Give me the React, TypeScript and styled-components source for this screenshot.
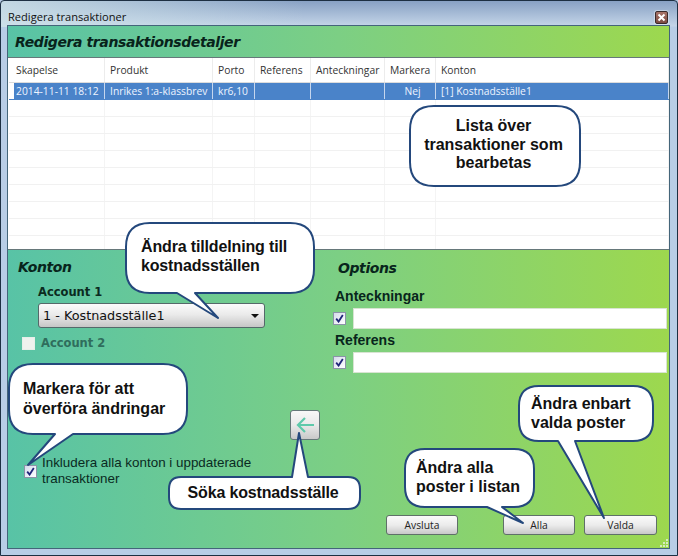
import React from "react";
import styled, { createGlobalStyle } from "styled-components";

const Global = createGlobalStyle`
  html, body { margin: 0; padding: 0; background: #b8cde6; }
  * { box-sizing: border-box; }
`;

const greenGradient = "linear-gradient(90deg, #58c3a6 0%, #7ccf84 50%, #9dd84e 100%)";

const Window = styled.div`
  position: relative;
  width: 678px;
  height: 556px;
  display: flex;
  flex-direction: column;
  padding: 0 8px 7px 7px;
  border: 1px solid #1d2f42;
  border-radius: 4px 4px 0 0;
  overflow: hidden;
  background:
    linear-gradient(90deg, rgba(205, 225, 232, 0.85) 0, rgba(205, 225, 232, 0) 45%) 0 0 / 100% 26px no-repeat,
    linear-gradient(180deg, #88a1c4 0, #c4d5e8 25px, #b8cde6 26px, #b8cde6 100%);
`;

const TitleBar = styled.div`
  height: 25px;
  flex: none;
  display: flex;
  align-items: center;
  justify-content: space-between;
  padding: 7px 1px 0 0;
  font: 11.1px/16px "Open Sans", sans-serif;
  color: #111;
`;

const CloseButton = styled.div`
  width: 13px;
  height: 13px;
  display: flex;
  align-items: center;
  justify-content: center;
  background: linear-gradient(180deg, #a87468, #7c4a42);
  border: 1px solid #3a2a2a;
  border-radius: 2px;
  box-shadow: 0 0 0 1px rgba(255, 255, 255, 0.35);
`;

const Content = styled.div`
  flex: 1;
  display: flex;
  flex-direction: column;
  min-height: 0;
  outline: 1px solid #44657a;
`;

const Banner = styled.div`
  height: 31px;
  flex: none;
  display: flex;
  align-items: center;
  padding-left: 7px;
  background: ${greenGradient};
  font: italic bold 14px/20px "DejaVu Sans", sans-serif;
  letter-spacing: -0.4px;
  color: #08231b;
`;

const List = styled.div`
  height: 193px;
  flex: none;
  background: #fff;
  border-top: 1px solid #66787a;
  border-bottom: 1px solid #66787a;
  padding-left: 1px;
  overflow: hidden;
  font: 10.3px/16px "Open Sans", sans-serif;
`;

const columns = "96px 108px 42px 56px 74px 51px 1fr";

const HeaderRow = styled.div`
  display: grid;
  grid-template-columns: ${columns};
  height: 25px;
  border-bottom: 1px solid #dcdcdc;
  color: #333;
`;

const HeaderCell = styled.div<{ $first?: boolean }>`
  display: flex;
  align-items: center;
  padding-left: ${(p) => (p.$first ? "7px" : "5px")};
  border-right: 1px solid #ececec;
`;

const Row = styled.div<{ $selected?: boolean }>`
  display: grid;
  grid-template-columns: ${columns};
  height: 17px;
  border-bottom: 1px solid ${(p) => (p.$selected ? "#4a83c9" : "#f1f1f1")};
  color: #eef4ff;
`;

const Cell = styled.div<{ $selected?: boolean; $first?: boolean; $center?: boolean }>`
  padding-left: ${(p) => (p.$first ? "2px" : "5px")};
  margin-left: ${(p) => (p.$first ? "5px" : "0")};
  text-align: ${(p) => (p.$center ? "center" : "left")};
  white-space: nowrap;
  overflow: hidden;
  line-height: 16px;
  background: ${(p) => (p.$selected ? "#4a83c9" : "transparent")};
  border-right: 1px solid ${(p) => (p.$selected ? "#c5d6ee" : "#f4f4f4")};
`;

const Body = styled.div`
  flex: 1;
  display: flex;
  flex-direction: column;
  min-height: 0;
  background: ${greenGradient};
`;

const Columns = styled.div`
  display: flex;
`;

const LeftColumn = styled.div`
  width: 325px;
  flex: none;
  display: flex;
  flex-direction: column;
`;

const RightColumn = styled.div`
  flex: 1;
  padding-right: 2px;
  display: flex;
  flex-direction: column;
`;

const SectionTitle = styled.div<{ $top: number; $left: number }>`
  font: italic bold 14px/18px "DejaVu Sans", sans-serif;
  letter-spacing: -0.4px;
  color: #08251c;
  margin: ${(p) => p.$top}px 0 0 ${(p) => p.$left}px;
`;

const AccountLabel = styled.div`
  margin: 8px 0 0 30px;
  font: bold 11.5px/16px "DejaVu Sans", sans-serif;
  color: #0b2a20;
`;

const Select = styled.div`
  margin: 3px 0 0 30px;
  width: 227px;
  height: 25px;
  display: flex;
  align-items: center;
  justify-content: space-between;
  padding: 0 5px 0 4px;
  border: 1px solid #55696a;
  border-radius: 3px;
  background: linear-gradient(180deg, #fbfbfb 0%, #ebebeb 45%, #c6c6c6 100%);
  font: 12.8px/18px "DejaVu Sans", sans-serif;
  color: #111;
`;

const Caret = styled.span`
  width: 0;
  height: 0;
  border-left: 4px solid transparent;
  border-right: 4px solid transparent;
  border-top: 4px solid #111;
`;

const AccountTwoRow = styled.div`
  margin: 9px 0 0 14px;
  height: 13px;
  display: flex;
  align-items: center;
  gap: 6px;
  font: bold 11.5px/13px "DejaVu Sans", sans-serif;
  color: #2f6d5c;
`;

const CheckBox = styled.div<{ $disabled?: boolean }>`
  width: 13px;
  height: 13px;
  flex: none;
  display: flex;
  align-items: center;
  justify-content: center;
  border: 1px solid ${(p) => (p.$disabled ? "#e6efe9" : "#8b93a8")};
  background: ${(p) =>
    p.$disabled ? "#eef2ee" : "linear-gradient(135deg, #d6dbec 0%, #fff 100%)"};
`;

const ArrowRow = styled.div`
  margin: 60px 0 0 282px;
`;

const ArrowButton = styled.div`
  width: 30px;
  height: 30px;
  display: flex;
  align-items: center;
  justify-content: center;
  border: 1px solid #66797a;
  border-radius: 3px;
  background: linear-gradient(180deg, #f8f8f8 0%, #e9e9e9 50%, #c9c9c9 100%);
`;

const IncludeRow = styled.div`
  margin: 15px 0 0 16px;
  display: flex;
  gap: 5px;
  font: 13.4px/16px "Liberation Sans", sans-serif;
  color: #0a2a22;
`;

const IncludeCheck = styled.div`
  margin-top: 10px;
  flex: none;
`;

const OptionLabel = styled.div<{ $top: number }>`
  margin: ${(p) => p.$top}px 0 0 2px;
  font: bold 14px/16px "Liberation Sans", sans-serif;
  color: #08251c;
`;

const OptionRow = styled.div`
  margin-top: 4px;
  display: flex;
  align-items: center;
  gap: 7px;
`;

const TextField = styled.div`
  flex: 1;
  height: 21px;
  background: #fff;
  border: 1px solid #d8e4d2;
`;

const Footer = styled.div`
  margin-top: auto;
  display: flex;
  justify-content: flex-end;
  gap: 9px;
  padding: 0 12px 13px 0;
`;

const FooterButton = styled.div<{ $gapAfter?: boolean; $wide?: boolean }>`
  width: ${(p) => (p.$wide ? "73px" : "72px")};
  height: 20px;
  margin-right: ${(p) => (p.$gapAfter ? "36px" : "0")};
  display: flex;
  align-items: center;
  justify-content: center;
  border: 1px solid #5f7068;
  border-radius: 3px;
  background: linear-gradient(180deg, #fafafa 0%, #ececec 50%, #c8c8c8 100%);
  font: 10.3px/16px "Open Sans", sans-serif;
  color: #222;
`;

const Grip = styled.svg`
  position: absolute;
  right: 8px;
  bottom: 7px;
`;

const CalloutBox = styled.div<{ $x: number; $y: number; $w: number; $h: number }>`
  position: absolute;
  left: ${(p) => p.$x - 1}px;
  top: ${(p) => p.$y - 1}px;
  width: ${(p) => p.$w}px;
  height: ${(p) => p.$h}px;
`;

const CalloutShape = styled.svg`
  position: absolute;
  left: 0;
  top: 0;
  overflow: visible;
`;

const CalloutText = styled.div<{ $pad: number; $center?: boolean; $lh: number; $top: number; $tight?: boolean }>`
  position: relative;
  padding: ${(p) => p.$top}px ${(p) => (p.$center ? "3px" : "0")} 0 ${(p) => p.$pad}px;
  text-align: ${(p) => (p.$center ? "center" : "left")};
  font: bold 16px/${(p) => p.$lh}px "Liberation Sans", Arial, sans-serif;
  letter-spacing: ${(p) => (p.$tight ? "-0.15px" : "0")};
  color: #111;
  white-space: nowrap;
`;

type Tail = { a: number; b: number; tx: number; ty: number };

function bubblePath(w: number, h: number, r: number, tail?: Tail) {
  const bottom = tail
    ? `L${tail.b} ${h} L${tail.tx} ${tail.ty} L${tail.a} ${h} `
    : "";
  return (
    `M${r} 0 H${w - r} Q${w} 0 ${w} ${r} V${h - r} Q${w} ${h} ${w - r} ${h} ` +
    bottom +
    `L${r} ${h} Q0 ${h} 0 ${h - r} V${r} Q0 0 ${r} 0 Z`
  );
}

function bubblePathTop(w: number, h: number, r: number, tail: Tail) {
  return (
    `M${r} 0 L${tail.a} 0 L${tail.tx} ${tail.ty} L${tail.b} 0 H${w - r} Q${w} 0 ${w} ${r} ` +
    `V${h - r} Q${w} ${h} ${w - r} ${h} H${r} Q0 ${h} 0 ${h - r} V${r} Q0 0 ${r} 0 Z`
  );
}

type CalloutProps = {
  x: number;
  y: number;
  w: number;
  h: number;
  r: number;
  tail?: Tail;
  up?: boolean;
  pad?: number;
  center?: boolean;
  tight?: boolean;
  top: number;
  lh: number;
  lines: string[];
};

function Callout({ x, y, w, h, r, tail, up, pad = 0, center, tight, top, lh, lines }: CalloutProps) {
  const d = up && tail ? bubblePathTop(w, h, r, tail) : bubblePath(w, h, r, tail);
  return (
    <CalloutBox $x={x} $y={y} $w={w} $h={h}>
      <CalloutShape width={w} height={h}>
        <path d={d} fill="#fff" stroke="#24487c" strokeWidth="2" strokeLinejoin="round" />
      </CalloutShape>
      <CalloutText $pad={pad} $center={center} $tight={tight} $top={top} $lh={lh}>
        {lines.map((l) => (
          <div key={l}>{l}</div>
        ))}
      </CalloutText>
    </CalloutBox>
  );
}

function Check() {
  return (
    <svg width="9" height="9" viewBox="0 0 9 9">
      <path d="M1.2 4.6 L3.6 7.6 L7.8 1" fill="none" stroke="#20267a" strokeWidth="1.8" />
    </svg>
  );
}

const headers = ["Skapelse", "Produkt", "Porto", "Referens", "Anteckningar", "Markera", "Konton"];
const emptyRows = [1, 2, 3, 4, 5, 6, 7, 8, 9];

export default function App() {
  return (
    <>
      <Global />
      <Window>
        <TitleBar>
          <span>Redigera transaktioner</span>
          <CloseButton>
            <svg width="9" height="9" viewBox="0 0 9 9">
              <path d="M1.5 1.5 L7.5 7.5 M7.5 1.5 L1.5 7.5" stroke="#fff" strokeWidth="2" />
            </svg>
          </CloseButton>
        </TitleBar>
        <Content>
          <Banner>Redigera transaktionsdetaljer</Banner>
          <List>
            <HeaderRow>
              {headers.map((h, i) => (
                <HeaderCell key={h} $first={i === 0}>
                  {h}
                </HeaderCell>
              ))}
            </HeaderRow>
            <Row $selected>
              <Cell $selected $first>2014-11-11 18:12</Cell>
              <Cell $selected>Inrikes 1:a-klassbrev</Cell>
              <Cell $selected>kr6,10</Cell>
              <Cell $selected />
              <Cell $selected />
              <Cell $selected $center>Nej</Cell>
              <Cell $selected>[1] Kostnadsställe1</Cell>
            </Row>
            {emptyRows.map((n) => (
              <Row key={n}>
                {headers.map((h) => (
                  <Cell key={h} />
                ))}
              </Row>
            ))}
          </List>
          <Body>
            <Columns>
              <LeftColumn>
                <SectionTitle $top={8} $left={10}>Konton</SectionTitle>
                <AccountLabel>Account 1</AccountLabel>
                <Select>
                  <span>1 - Kostnadsställe1</span>
                  <Caret />
                </Select>
                <AccountTwoRow>
                  <CheckBox $disabled />
                  <span>Account 2</span>
                </AccountTwoRow>
                <ArrowRow>
                  <ArrowButton>
                    <svg width="20" height="20" viewBox="0 0 20 20">
                      <path
                        d="M19 10 H3 M10 3 L3 10 L10 17"
                        fill="none"
                        stroke="#5ec9aa"
                        strokeWidth="2.2"
                      />
                    </svg>
                  </ArrowButton>
                </ArrowRow>
                <IncludeRow>
                  <IncludeCheck>
                    <CheckBox>
                      <Check />
                    </CheckBox>
                  </IncludeCheck>
                  <span>
                    Inkludera alla konton i uppdaterade
                    <br />
                    transaktioner
                  </span>
                </IncludeRow>
              </LeftColumn>
              <RightColumn>
                <SectionTitle $top={9} $left={5}>Options</SectionTitle>
                <OptionLabel $top={11}>Anteckningar</OptionLabel>
                <OptionRow>
                  <CheckBox>
                    <Check />
                  </CheckBox>
                  <TextField />
                </OptionRow>
                <OptionLabel $top={3}>Referens</OptionLabel>
                <OptionRow>
                  <CheckBox>
                    <Check />
                  </CheckBox>
                  <TextField />
                </OptionRow>
              </RightColumn>
            </Columns>
            <Footer>
              <FooterButton $gapAfter>Avsluta</FooterButton>
              <FooterButton>Alla</FooterButton>
              <FooterButton $wide>Valda</FooterButton>
            </Footer>
          </Body>
        </Content>
        <Grip width="10" height="10" viewBox="0 0 10 10">
          <g fill="#d6ecc0">
            <rect x="7" y="1" width="2" height="2" />
            <rect x="4" y="4" width="2" height="2" />
            <rect x="7" y="4" width="2" height="2" />
            <rect x="1" y="7" width="2" height="2" />
            <rect x="4" y="7" width="2" height="2" />
            <rect x="7" y="7" width="2" height="2" />
          </g>
        </Grip>
        <Callout
          x={410}
          y={106}
          w={170}
          h={80}
          r={24}
          center
          top={11}
          lh={18.5}
          lines={["Lista över", "transaktioner som", "bearbetas"]}
        />
        <Callout
          x={126}
          y={223}
          w={188}
          h={70}
          r={24}
          pad={15}
          top={15}
          lh={18.5}
          tight
          tail={{ a: 51, b: 69, tx: 92, ty: 95 }}
          lines={["Ändra tilldelning till", "kostnadsställen"]}
        />
        <Callout
          x={9}
          y={364}
          w={178}
          h={70}
          r={24}
          pad={14}
          top={15}
          lh={19.5}
          tail={{ a: 46, b: 64, tx: 19, ty: 101 }}
          lines={["Markera för att", "överföra ändringar"]}
        />
        <Callout
          x={169}
          y={477}
          w={191}
          h={32}
          r={12}
          center
          tight
          top={6}
          lh={19}
          up
          tail={{ a: 123, b: 139, tx: 130, ty: -44 }}
          lines={["Söka kostnadsställe"]}
        />
        <Callout
          x={405}
          y={449}
          w={129}
          h={58}
          r={20}
          pad={11}
          top={9}
          lh={19}
          tail={{ a: 82, b: 97, tx: 118, ty: 74 }}
          lines={["Ändra alla", "poster i listan"]}
        />
        <Callout
          x={519}
          y={386}
          w={134}
          h={55}
          r={20}
          pad={12}
          top={8}
          lh={19}
          tail={{ a: 39, b: 56, tx: 85, ty: 132 }}
          lines={["Ändra enbart", "valda poster"]}
        />
      </Window>
    </>
  );
}
